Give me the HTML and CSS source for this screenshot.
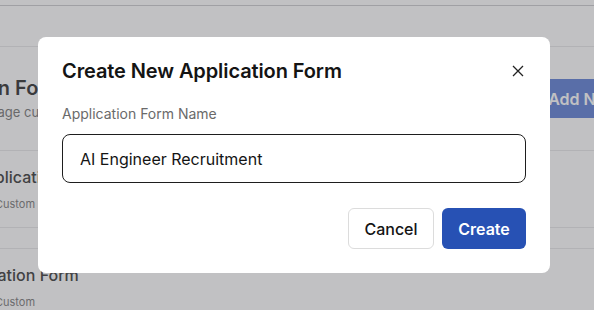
FILE: index.html
```html
<!DOCTYPE html>
<html lang="en">
<head>
<meta charset="utf-8">
<title>Create New Application Form</title>
<link rel="stylesheet" href="styles.css">
</head>
<body>
<div class="page">
  <div class="topbar"></div>
  <div class="tabs"></div>
  <div class="header">
    <div class="header-text">
      <h1 class="page-title">Application Forms</h1>
      <p class="page-sub">Create and manage custom application forms</p>
    </div>
    <button class="add-btn">Add New Form</button>
  </div>
  <div class="row">
    <div class="row-title">Standard Application Form</div>
    <div class="row-meta">Template section: Custom</div>
  </div>
  <div class="spacer"></div>
  <div class="row">
    <div class="row-title">Intern Application Form</div>
    <div class="row-meta">Template section: Custom</div>
  </div>
</div>

<div class="overlay"></div>

<div class="modal" role="dialog" aria-labelledby="modal-title">
  <div class="modal-head">
    <h2 id="modal-title" class="modal-title">Create New Application Form</h2>
    <button class="close-btn" aria-label="Close">
      <svg width="12" height="12" viewBox="0 0 12 12"><path d="M1 1L11 11M11 1L1 11" stroke="#222" stroke-width="1.3" fill="none"/></svg>
    </button>
  </div>
  <label class="field-label" for="form-name">Application Form Name</label>
  <input id="form-name" class="field-input" type="text" value="AI Engineer Recruitment">
  <div class="modal-actions">
    <button class="btn btn-cancel">Cancel</button>
    <button class="btn btn-create">Create</button>
  </div>
</div>
</body>
</html>
```

FILE: styles.css
```css
* { box-sizing: border-box; }
html, body { margin: 0; padding: 0; }
body {
  width: 594px;
  height: 310px;
  overflow: hidden;
  background: #ffffff;
  font-family: Inter, "Noto Sans", sans-serif;
  position: relative;
}

.page {
  margin-left: -100px;
  width: 800px;
  color: #1f1f1f;
}
.topbar {
  height: 6px;
  border-bottom: 1px solid #c9c9cc;
}
.tabs {
  height: 41px;
  border-bottom: 1px solid #e6e6e8;
}
.header {
  display: flex;
  align-items: center;
  justify-content: space-between;
  height: 104px;
  border-bottom: 1px solid #e6e6e8;
  padding-right: 22px;
}
.header-text { display: flex; flex-direction: column; gap: 4px; margin-top: -2px; }
.page-title {
  margin: 0;
  font-size: 20px;
  font-weight: 600;
  color: #1f1f1f;
}
.page-sub {
  margin: 0;
  font-size: 13px;
  color: #6b6b6b;
}
.add-btn {
  font-family: inherit;
  background: #5376d2;
  color: #fff;
  border: none;
  border-radius: 6px;
  height: 39px;
  padding: 0 16px 0 40px;
  font-size: 16px;
  font-weight: 600;
  white-space: nowrap;
}
.row {
  height: 77px;
  border-bottom: 1px solid #e6e6e8;
  display: flex;
  flex-direction: column;
  justify-content: center;
  gap: 10px;
}
.row-title { font-size: 16px; font-weight: 500; color: #2a2a2a; }
.row-meta { font-size: 11px; color: #707070; }
.spacer {
  height: 21px;
  border-bottom: 1px solid #e6e6e8;
}

.overlay {
  position: absolute;
  inset: 0;
  background: rgba(100, 100, 105, 0.4);
}

.modal {
  position: absolute;
  left: 38px;
  top: 37px;
  width: 512px;
  height: 236px;
  background: #fff;
  border-radius: 8px;
  padding: 24px;
  display: flex;
  flex-direction: column;
}
.modal-head {
  display: flex;
  align-items: center;
  justify-content: space-between;
  height: 20px;
}
.modal-title {
  margin: 0;
  font-size: 20px;
  font-weight: 600;
  color: #141414;
  letter-spacing: -0.1px;
}
.close-btn {
  background: none;
  border: none;
  padding: 0;
  width: 12px;
  height: 12px;
  display: flex;
  margin-right: 2px;
}
.field-label {
  margin-top: 23px;
  font-size: 14px;
  line-height: 20px;
  color: #6a6a6a;
}
.field-input {
  margin-top: 10px;
  height: 49px;
  width: 100%;
  border: 1px solid #1e1e1e;
  border-radius: 8px;
  padding: 0 17px;
  font-family: inherit;
  font-size: 16px;
  color: #141414;
  outline: none;
}
.modal-actions {
  margin-top: 25px;
  display: flex;
  justify-content: flex-end;
  gap: 8px;
}
.btn {
  font-family: inherit;
  height: 41px;
  border-radius: 6px;
  font-size: 16px;
  font-weight: 500;
}
.btn-cancel {
  width: 86px;
  background: #fff;
  color: #141414;
  border: 1px solid #dcdcdc;
}
.btn-create {
  width: 84px;
  background: #2751b4;
  color: #fff;
  border: none;
  font-weight: 600;
}
```
